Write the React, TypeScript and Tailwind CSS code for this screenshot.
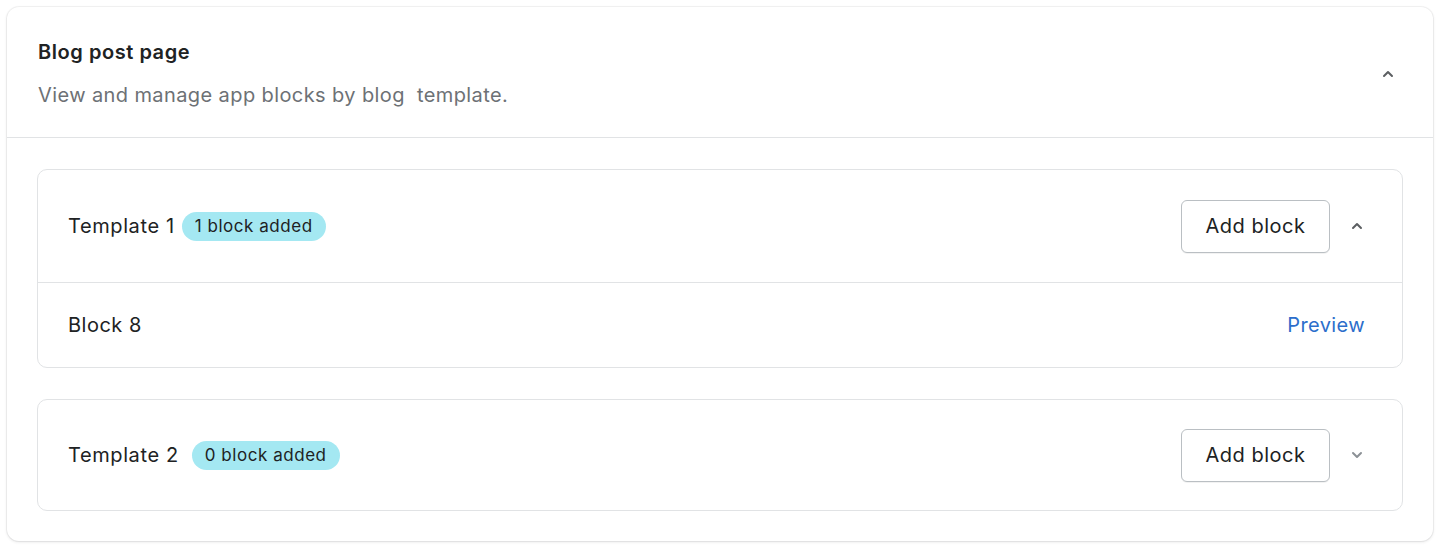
import { useState } from "react";

// Blog post page: app blocks grouped by template, each template collapsible.

const templates = [
  { id: 1, name: "Template 1", blocks: ["Block 8"] },
  { id: 2, name: "Template 2", blocks: [] as string[] },
];

function Chevron({ up, muted }: { up: boolean; muted?: boolean }) {
  return (
    <svg
      viewBox="0 0 20 20"
      className={`h-5 w-5 ${muted ? "text-[#8c9196]" : "text-[#5c5f62]"}`}
      fill="currentColor"
    >
      {up ? (
        <path d="M14.707 12.707a1 1 0 0 1-1.414 0L10 9.414l-3.293 3.293a1 1 0 0 1-1.414-1.414l4-4a1 1 0 0 1 1.414 0l4 4a1 1 0 0 1 0 1.414Z" />
      ) : (
        <path d="M5.293 7.293a1 1 0 0 1 1.414 0L10 10.586l3.293-3.293a1 1 0 1 1 1.414 1.414l-4 4a1 1 0 0 1-1.414 0l-4-4a1 1 0 0 1 0-1.414Z" />
      )}
    </svg>
  );
}

function TemplateCard({ t, open, onToggle }: { t: (typeof templates)[number]; open: boolean; onToggle: () => void }) {
  return (
    <div className="rounded-[10px] border border-[#e1e3e5] bg-white">
      <div className={`flex ${open ? "h-[112px]" : "h-[110px]"} items-center pl-[30px] pr-[35px]`}>
        <span className="text-[20px] tracking-[0.6px] text-[#202223]">{t.name}</span>
        <span
          className={`${t.id === 1 ? "ml-[7px]" : "ml-[13px]"} rounded-full bg-[#a4e8f2] px-[13px] py-[3px] text-[17px] leading-[23px] tracking-[0.55px] text-[#202223]`}
        >
          {t.blocks.length} block added
        </span>
        <div className="ml-auto flex items-center gap-[17px]">
          <button className="h-[53px] w-[149px] rounded-[6px] border border-[#babfc3] bg-white text-[20px] tracking-[0.5px] text-[#202223] shadow-[0_1px_0_rgba(0,0,0,0.05)]">
            Add block
          </button>
          <button onClick={onToggle} className="flex h-5 w-5 items-center justify-center">
            <Chevron up={open} muted={!open} />
          </button>
        </div>
      </div>
      {open &&
        t.blocks.map((b) => (
          <div key={b} className="flex h-[85px] items-center border-t border-[#e1e3e5] pl-[30px] pr-[37px]">
            <span className="text-[20px] tracking-[0.5px] text-[#202223]">{b}</span>
            <a className="ml-auto text-[20px] tracking-[0.4px] text-[#2c6ecb]" href="#">
              Preview
            </a>
          </div>
        ))}
    </div>
  );
}

export default function App() {
  const [open, setOpen] = useState<Record<number, boolean>>({ 1: true, 2: false });

  return (
    <div className="min-h-[549px] bg-white p-[7px] font-['Inter',sans-serif] antialiased">
      <div className="rounded-[12px] bg-white shadow-[0_0_0_1px_rgba(63,63,68,0.06),0_1px_3px_rgba(63,63,68,0.15)]">
        <div className="flex items-center border-b border-[#e1e3e5] pt-[32px] pb-[29px] pl-[31px] pr-[35px]">
          <div>
            <h2 className="text-[20px] font-semibold leading-[26px] tracking-[0.55px] text-[#202223]">
              Blog post page
            </h2>
            <p className="mt-[17px] text-[20px] leading-[26px] tracking-[0.4px] text-[#6d7175]">
              View and manage app blocks by blog&nbsp; template.
            </p>
          </div>
          <div className="ml-auto">
            <Chevron up />
          </div>
        </div>
        <div className="flex flex-col gap-[31px] px-[30px] pt-[31px] pb-[30px]">
          {templates.map((t) => (
            <TemplateCard
              key={t.id}
              t={t}
              open={!!open[t.id]}
              onToggle={() => setOpen((o) => ({ ...o, [t.id]: !o[t.id] }))}
            />
          ))}
        </div>
      </div>
    </div>
  );
}
